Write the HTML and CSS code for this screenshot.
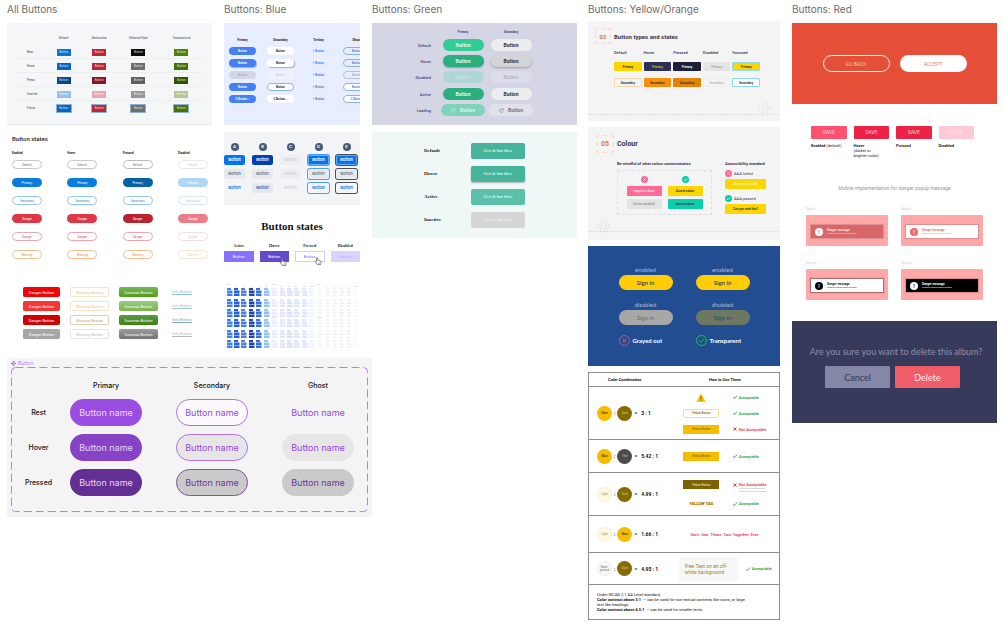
FILE: index.html
```html
<!DOCTYPE html>
<html lang="en">
<head>
<meta charset="utf-8">
<title>Button inspiration board</title>
<link rel="stylesheet" href="styles.css">
</head>
<body>
<svg class="defs" width="0" height="0" aria-hidden="true">
  <symbol id="check" viewBox="0 0 12 12"><path d="M2 6.5 4.8 9.2 10.2 3" fill="none" stroke="currentColor" stroke-width="1.6"/></symbol>
  <symbol id="cross" viewBox="0 0 12 12"><path d="M3 3 9 9M9 3 3 9" fill="none" stroke="currentColor" stroke-width="1.8"/></symbol>
  <symbol id="reload" viewBox="0 0 12 12"><path d="M9.5 8.5A4.3 4.3 0 1 1 9.6 3.7" fill="none" stroke="currentColor" stroke-width="1.5"/><path d="M10.8 1.4V5.2H7Z" fill="currentColor"/></symbol>
  <symbol id="hand" viewBox="0 0 16 16"><path d="M5 9V2.2a1.2 1.2 0 0 1 2.4 0V6.4l1.8.3 3.6 1c1 .3 1.4 1 1.3 2L13.500 15H6.500L2.200 9.800C1.600 8.500 3 7.800 3.800 8.600Z" fill="#fff" stroke="#444" stroke-width="1.200"/><path d="M8.500 11v2.500M10.800 11v2.500" stroke="#444" stroke-width=".8"/></symbol>
  <symbol id="cactus" viewBox="0 0 14 18"><path d="M5.500 17V3a1.800 1.800 0 0 1 3.600 0V15M5.500 12.500H3.500a2 2 0 0 1-2-2V8a1 1 0 0 1 2 0v2h2M9 10h1.500V7a1 1 0 0 1 2.200 0v3a2.500 2.500 0 0 1-2.500 2.500H9" fill="none" stroke="#dededf" stroke-width=".8" stroke-dasharray="1.500 .8"/></symbol>
  <symbol id="corners" viewBox="0 0 18 18"><path d="M.8 3V.8H3M7 .8h4M15 .8h2.200V3M17.200 7v4M17.200 15v2.200H15M11 17.200H7M3 17.200H.8V15M.8 11V7" fill="none" stroke="#fbd3ab" stroke-width="1"/></symbol>
</svg>

<main class="board">
  <section class="left">
    <div class="left-cols">
      <div class="col">
        <h2>All Buttons</h2>
        <div class="pa">
          <table>
            <colgroup><col class="c16"><col class="c19"><col class="c19"><col class="c23"><col class="c23"></colgroup>
            <thead><tr><td></td><th>Default</th><th>Destructive</th><th>Editorial/Dark</th><th>Transactional</th></tr></thead>
            <tbody>
            <tr><th>Rest</th><td><button class="a-blue">Button</button></td><td><button class="a-red">Button</button></td><td><button class="a-black">Button</button></td><td><button class="a-green">Button</button></td></tr>
            <tr><th>Hover</th><td><button class="a-blue2">Button</button></td><td><button class="a-red">Button</button></td><td><button class="a-gray">Button</button></td><td><button class="a-green2">Button</button></td></tr>
            <tr><th>Press</th><td><button class="a-blue3">Button</button></td><td><button class="a-red3">Button</button></td><td><button class="a-gray2">Button</button></td><td><button class="a-green3">Button</button></td></tr>
            <tr><th>Inactive</th><td><button class="a-blue4">Button</button></td><td><button class="a-red4">Button</button></td><td><button class="a-gray4">Button</button></td><td><button class="a-green4">Button</button></td></tr>
            <tr><th>Focus</th><td><button class="a-blue2 a-focus">Button</button></td><td><button class="a-red a-focus">Button</button></td><td><button class="a-gray a-focus">Button</button></td><td><button class="a-green2 a-focus">Button</button></td></tr>
            </tbody>
          </table>
        </div>

        <div class="pb">
          <h3>Button states</h3>
          <div class="pb-grid">
            <b>Enabled</b><b>Hover</b><b>Pressed</b><b>Disabled</b>
            <button class="b-def">Default</button><button class="b-def lift">Default</button><button class="b-def dark">Default</button><button class="b-def off">Default</button>
            <button class="b-pri">Primary</button><button class="b-pri lift">Primary</button><button class="b-pri press">Primary</button><button class="b-pri fade">Primary</button>
            <button class="b-sec">Secondary</button><button class="b-sec lift">Secondary</button><button class="b-sec">Secondary</button><button class="b-sec off">Secondary</button>
            <button class="b-dan">Danger</button><button class="b-dan lift">Danger</button><button class="b-dan press">Danger</button><button class="b-dan fade">Danger</button>
            <button class="b-dao">Danger</button><button class="b-dao lift">Danger</button><button class="b-dao">Danger</button><button class="b-dao off">Danger</button>
            <button class="b-war">Warning</button><button class="b-war lift">Warning</button><button class="b-war">Warning</button><button class="b-war off">Warning</button>
          </div>
        </div>

        <div class="pc">
          <button class="c-d1">Danger Button</button><button class="c-w1">Warning Button</button><button class="c-s1">Success Button</button><a href="#" class="c-i1">Info Button</a>
          <button class="c-d2">Danger Button</button><button class="c-w1">Warning Button</button><button class="c-s2">Success Button</button><a href="#" class="c-i2">Info Button</a>
          <button class="c-d3">Danger Button</button><button class="c-w3">Warning Button</button><button class="c-s3">Success Button</button><a href="#" class="c-i3">Info Button</a>
          <button class="c-d4">Danger Button</button><button class="c-w4">Warning Button</button><button class="c-s4">Success Button</button><a href="#" class="c-i4">Info Button</a>
        </div>
      </div>

      <div class="col">
        <h2>Buttons: Blue</h2>
        <div class="pd">
          <b>Primary</b><b>Secondary</b><b>Tertiary</b><b>Ghost</b>
          <button class="d-p">Button</button><button class="d-s">Button</button><button class="d-t">+ Button</button><button class="d-g">Button</button>
          <button class="d-p shade">Button</button><button class="d-s shade">Button</button><button class="d-t">+ Button</button><button class="d-g">Button</button>
          <button class="d-p off">Button</button><button class="d-s off">Button</button><button class="d-t">+ Button</button><button class="d-g off">Button</button>
          <button class="d-p">Button</button><button class="d-s ring">Button</button><button class="d-t">+ Button</button><button class="d-g fill">Button</button>
          <button class="d-p">C Button...</button><button class="d-s">C Button...</button><button class="d-t">+ Button</button><button class="d-g fill">C Button</button>
        </div>

        <div class="pe">
          <i>A</i><i>B</i><i>C</i><i>D</i><i>E</i>
          <button class="e-p">Button</button><button class="e-p2">Button</button><button class="e-off">Button</button><button class="e-p halo">Button</button><button class="e-p halo-k">Button</button>
          <button class="e-s">Button</button><button class="e-s">Button</button><button class="e-off">Button</button><button class="e-s halo">Button</button><button class="e-s halo-k">Button</button>
          <button class="e-t">Button</button><button class="e-s navy">Button</button><button class="e-t off">Button</button><button class="e-t halo">Button</button><button class="e-t halo-k">Button</button>
        </div>

        <div class="pf">
          <h3>Button states</h3>
          <div class="pf-grid">
            <b>Active</b><b>Hover</b><b>Pressed</b><b>Disabled</b>
            <button class="f-1">Button</button>
            <button class="f-2">Button<svg class="hand"><use href="#hand"/></svg></button>
            <button class="f-3">Button<svg class="hand"><use href="#hand"/></svg></button>
            <button class="f-4">Button</button>
          </div>
        </div>

        <svg class="swatches" viewBox="0 0 136 64" aria-hidden="true">
          <defs>
            <g id="cell"><path d="M0 0h4v2H0zM0 2.500h5.500v2.500H0zM0 5.500h5.500v2.500H0z"/></g>
            <g id="strong">
              <use href="#cell" x="3" fill="#3f82ea"/><use href="#cell" x="10" fill="#2560d8"/><use href="#cell" x="17" fill="#4b80e0"/><use href="#cell" x="25" fill="#2747ac"/><use href="#cell" x="32" fill="#3370e4"/><use href="#cell" x="40" fill="#96c2fb"/>
              <path d="M0 1h2M0 4h2M0 7h2" stroke="#ddd" stroke-width=".6"/>
            </g>
            <g id="soft">
              <use href="#cell" x="0" fill="#e9edfc"/><use href="#cell" x="8" fill="#e1e7fa"/><use href="#cell" x="15" fill="#dae2f9"/><use href="#cell" x="22" fill="#e2e5f5"/><use href="#cell" x="30" fill="#dfe8fc"/><use href="#cell" x="37" fill="#f0f5ff"/>
            </g>
            <g id="pale" stroke-width="1.200">
              <path d="M1 1h3M1 4h4M1 7h3M9 1h3M9 4h4M9 7h3M16 1h3M16 4h4M16 7h3" stroke="#e4eaf9"/><path d="M23 1h3M23 4h4M23 7h3M30 1h3M30 4h4M30 7h3" stroke="#dde3f4"/><path d="M37 1h3M37 4h4M37 7h3" stroke="#eff4ff"/>
            </g>
            <g id="line"><use href="#strong"/><use href="#soft" x="48"/><use href="#pale" x="93"/></g>
          </defs>
          <path d="M3 .5h3M48 .5h4M93 .5h3M3 33.500h5M48 33.500h5M93 33.500h5M11 2.500h2M19 2.500h2M26 2.500h2M34 2.500h2M41 2.500h3M56 2.500h2M64 2.500h2M71 2.500h2M79 2.500h2M86 2.500h3M101 2.500h2M109 2.500h2M116 2.500h2M124 2.500h2M131 2.500h3" stroke="#ccc" stroke-width=".6"/>
          <use href="#line" y="4"/><use href="#line" y="15"/><use href="#line" y="25"/><use href="#line" y="35"/><use href="#line" y="46"/><use href="#line" y="56"/>
        </svg>
      </div>
    </div>

    <div class="purple">
      <div class="purple-tag"><svg viewBox="0 0 12 12"><path d="M6 0 8.500 2.500 6 5 3.500 2.500ZM6 7 8.500 9.500 6 12 3.500 9.500ZM2.500 3.500 5 6 2.500 8.500 0 6ZM9.500 3.500 12 6 9.500 8.500 7 6Z" fill="#9a45e6"/></svg>Button</div>
      <div class="frame">
        <svg class="dash"><rect x=".5" y=".5" width="100%" height="100%" rx="4"/></svg>
        <div class="frame-labels"><span></span><b>Rest</b><b>Hover</b><b>Pressed</b></div>
        <div class="matrix">
          <b>Primary</b><b>Secondary</b><b>Ghost</b>
          <button class="p-1">Button name</button><button class="s-1">Button name</button><button class="g-1">Button name</button>
          <button class="p-2">Button name</button><button class="s-2">Button name</button><button class="g-2">Button name</button>
          <button class="p-3">Button name</button><button class="s-3">Button name</button><button class="g-3">Button name</button>
        </div>
      </div>
    </div>
  </section>

  <section class="green">
    <h2>Buttons: Green</h2>
    <div class="pg">
      <span></span><b>Primary</b><b>Secondary</b>
      <em>Default</em><button class="g-p">Button</button><button class="g-s">Button</button>
      <em>Hover</em><button class="g-p deep lift">Button</button><button class="g-s deep lift">Button</button>
      <em>Disabled</em><button class="g-p off">Button</button><button class="g-s off">Button</button>
      <em class="down">Active</em><button class="g-p deep down">Button</button><button class="g-s down">Button</button>
      <em>Loading</em><button class="g-p load"><svg><use href="#reload"/></svg>Button</button><button class="g-s load"><svg><use href="#reload"/></svg>Button</button>
    </div>
    <div class="ph">
      <b>Default</b><button>Get it for free</button>
      <b>Hover</b><button class="lift">Get it for free</button>
      <b>Active</b><button class="light">Get it for free</button>
      <b>Inactive</b><button class="off">Get it for free</button>
    </div>
  </section>

  <section class="yellow">
    <h2>Buttons: Yellow/Orange</h2>
    <div class="pi">
      <div class="num-row"><span class="num"><svg><use href="#corners"/></svg>02</span><h3>Button types and states</h3></div>
      <div class="pi-grid">
        <b>Default</b><b>Hover</b><b>Pressed</b><b>Disabled</b><b>Focused</b>
        <button class="y">Primary</button><button class="y-h">Primary</button><button class="y-p">Primary</button><button class="y-d">Primary</button><button class="y y-f">Primary</button>
        <button class="o">Secondary</button><button class="o-h">Secondary</button><button class="o-p">Secondary</button><button class="o-d">Secondary</button><button class="o o-f">Secondary</button>
      </div>
      <div class="ground right"><svg><use href="#cactus"/></svg></div>
    </div>

    <div class="pj">
      <div class="num-row big"><span class="num"><svg><use href="#corners"/></svg>05</span><h3>Colour</h3></div>
      <div class="pj-cols">
        <div>
          <h4>Be mindful of what colour communicates</h4>
          <div class="pj-box">
            <svg class="dot pink"><use href="#cross"/></svg><svg class="dot teal"><use href="#check"/></svg>
            <button class="neg">Negative colour</button><button class="acc">Accent colour</button>
            <button class="dis">Seems disabled</button><button class="acc2">Accent colour</button>
          </div>
        </div>
        <div class="aaa">
          <h4>Accessibility standard</h4>
          <p><svg class="dot pink"><use href="#cross"/></svg>AAA failed</p>
          <button class="fail">Can you read this?</button>
          <p class="second"><svg class="dot teal"><use href="#check"/></svg>AAA passed</p>
          <button>Can you read this?</button>
        </div>
      </div>
      <div class="ground"><svg><use href="#cactus"/></svg></div>
    </div>

    <div class="pk">
      <span>enabled</span><span>enabled</span>
      <button>Sign in</button><button>Sign in</button>
      <span class="gap">disabled</span><span class="gap">disabled</span>
      <button class="grayed">Sign in</button><button class="clear">Sign in</button>
      <strong><svg class="no"><use href="#cross"/></svg>Grayed out</strong><strong><svg class="yes"><use href="#check"/></svg>Transparent</strong>
    </div>

    <table class="pl">
      <colgroup><col class="combo"><col class="use"><col></colgroup>
      <thead><tr><th>Color Combination</th><th colspan="2">How to Use Them</th></tr></thead>
      <tbody>
      <tr class="r1"><td><div class="mix"><i class="main">Main</i>:<i class="darkc">Dark</i>=<b>3 : 1</b></div></td>
        <td><div class="stack"><svg class="tri" viewBox="0 0 12 11"><path d="M6 .5 11.800 10.800H.2Z" fill="#f6bd00"/><path d="M6 4v3.500M6 8.300v1.300" stroke="#866b00" stroke-width="1.300"/></svg><button class="l-out">Yellow Button</button><button class="l-fill">Yellow Button</button></div></td>
        <td><div class="stack res"><span class="ok"><svg><use href="#check"/></svg>Acceptable</span><span class="ok"><svg><use href="#check"/></svg>Acceptable</span><span class="bad"><svg><use href="#cross"/></svg>Not Acceptable</span></div></td></tr>
      <tr class="r2"><td><div class="mix"><i class="main">Main</i>:<i class="text">Text</i>=<b>5.42 : 1</b></div></td>
        <td><div class="stack"><button class="l-fill">Yellow Button</button></div></td>
        <td><div class="stack res"><span class="ok"><svg><use href="#check"/></svg>Acceptable</span></div></td></tr>
      <tr class="r3"><td><div class="mix"><i class="lightc">Light</i>:<i class="darkc">Dark</i>=<b>4.99 : 1</b></div></td>
        <td><div class="stack wide"><button class="l-dark">Yellow Button</button><mark>YELLOW TAG</mark></div></td>
        <td><div class="stack res wide"><span class="bad"><svg><use href="#cross"/></svg><span>Not Acceptable<small>(Non-yellow recognizable hex,<br>might confuse for other brands)</small></span></span><span class="ok"><svg><use href="#check"/></svg>Acceptable</span></div></td></tr>
      <tr class="r4"><td><div class="mix"><i class="lightc">Light</i>:<i class="main">Main</i>=<b>1.66 : 1</b></div></td>
        <td colspan="2" class="never">Don't. Use. These. Two. Together. Ever.</td></tr>
      <tr class="r5"><td><div class="mix"><i class="backc">Back-<br>ground</i>:<i class="darkc">Dark</i>=<b>4.95 : 1</b></div></td>
        <td colspan="2"><div class="free"><p>Free Text on an off-<br>white background</p><span class="ok"><svg><use href="#check"/></svg>Acceptable</span></div></td></tr>
      <tr class="r6"><td colspan="3">Under WCAG 2.1 AA Level standard,<br><b>Color contrast above 3:1</b> &nbsp;— can be used for non-textual contents like icons, or large<br>text like headings.<br><b>Color contrast above 4.5:1</b> &nbsp;— can be used for smaller texts.</td></tr>
      </tbody>
    </table>
  </section>

  <section class="red">
    <h2>Buttons: Red</h2>
    <div class="pm"><button class="back">GO BACK</button><button>ACCEPT</button></div>
    <div class="pn">
      <div><button class="n1">SAVE</button><p><b>Enabled</b> (default)</p></div>
      <div><button class="n2">SAVE</button><p><b>Hover</b><br>(darker or<br>brighter color)</p></div>
      <div><button class="n2">SAVE</button><p><b>Pressed</b></p></div>
      <div><button class="n4">SAVE</button><p><b>Disabled</b></p></div>
    </div>
    <p class="note">Mobile implementation for danger popup message</p>
    <div class="opts">
      <div><small>Option1</small><div class="phone"><div class="toast t1"><i>!</i><p><b>Danger message</b>Curabitur blandit tempus porttitor.</p></div></div></div>
      <div><small>Option2</small><div class="phone"><div class="toast t2"><i>!</i><p><b>Danger message</b>Curabitur blandit tempus porttitor.</p></div></div></div>
      <div><small>Option3</small><div class="phone"><div class="toast t3"><i>!</i><p><b>Danger message</b>Curabitur blandit tempus porttitor.</p></div></div></div>
      <div><small>Option4</small><div class="phone"><div class="toast t4"><i>!</i><p><b>Danger message</b>Curabitur blandit tempus porttitor.</p></div></div></div>
    </div>
    <div class="po">
      <p>Are you sure you want to delete this album?</p>
      <div><button class="cancel">Cancel</button><button class="delete">Delete</button></div>
    </div>
  </section>
</main>
</body>
</html>
```
FILE: styles.css
```css
* { box-sizing: border-box; }
body { margin: 0; background: #fff; color: #222; font-family: Roboto, "Liberation Sans", sans-serif; font-size: 4px; }
h2, h3, h4, p { margin: 0; }
h2 { height: 23px; padding-top: 3px; font: 400 10px/13px Inter, sans-serif; color: #6b6b6b; white-space: nowrap; }
button { display: flex; align-items: center; justify-content: center; margin: 0; padding: 0; border: 0; background: none; color: inherit; font: inherit; white-space: nowrap; position: relative; }
i, em { font-style: normal; }
b, th { font-weight: 700; }
.defs { position: absolute; }

.board { display: grid; grid-template-columns: 365fr 205fr 11px 192fr 12px 205fr; padding: 0 8px 0 7px; align-items: start; }
.yellow { grid-column: 4; }
.red { grid-column: 6; }
.left-cols { display: grid; grid-template-columns: 205fr 136fr; gap: 12px; padding-right: 12px; min-height: 358px; }
.col { min-width: 0; }

/* All buttons: bordered table */
.pa { padding: 8px 9px 10px; background: #f4f6f8; box-shadow: inset 0 -1px #e6e8ea; font-size: 3px; line-height: 4px; }
.pa table { width: 100%; table-layout: fixed; border-collapse: collapse; }
.pa td, .pa th { height: 14px; padding: 0; text-align: center; font-weight: 400; color: #444; white-space: nowrap; }
.pa tr { box-shadow: inset 0 -1px #eceeef; }
.pa tr:last-child { box-shadow: none; }
.pa thead tr { box-shadow: inset 0 -1px #eceeef; }
.pa tbody th { text-align: left; padding-left: 11px; }
.pa button { width: 14px; height: 7px; margin: 0 auto; color: #fffc; }
.c16 { width: 16%; } .c19 { width: 19%; } .c23 { width: 23%; }
.a-blue { background: #0a74d4; } .a-blue2 { background: #0565c0; } .a-blue3 { background: #05488e; } .a-blue4 { background: #95c2ea; }
.a-red { background: #bf2635; } .a-red3 { background: #8d1520; } .a-red4 { background: #e9a8af; }
.a-black { background: #0c0c0c; } .a-gray { background: #6e6e6e; } .a-gray2 { background: #606060; } .a-gray4 { background: #979797; }
.a-green { background: #4b8406; } .a-green2 { background: #427304; } .a-green3 { background: #2d5502; } .a-green4 { background: #b3c991; }
.a-focus { outline: 1px solid #8db1d3; }

/* Pill states */
.pb { padding: 10px 4px 0 5px; }
.pb h3 { font-size: 6px; font-weight: 500; line-height: 7px; }
.pb-grid { display: grid; grid-template-columns: repeat(4, 30px); justify-content: space-between; row-gap: 9px; padding-top: 9px; font-size: 3px; line-height: 4px; }
.pb-grid b { margin-bottom: -4px; }
.pb-grid button { height: 9px; border: 1px solid transparent; border-radius: 5px; }
.pb-grid .lift { box-shadow: 0 1px 1px #0001; }
.b-def { border-color: #c6c9cd !important; color: #777; } .b-def.dark { border-color: #b7bbc0 !important; }
.b-pri { background: #087ddc; color: #fff; } .b-pri.press { background: #0560a6; }
.b-sec { border-color: #97c7e6 !important; color: #2c8bc9; }
.b-dan { background: #dc3848; color: #fff; } .b-dan.press { background: #b92230; }
.b-dao { border-color: #eca5b2 !important; color: #d94a62; }
.b-war { border-color: #f3bf92 !important; color: #e98939; }
.pb-grid .off { opacity: .4; }
.b-pri.fade { background: #afd7f3; } .b-dan.fade { background: #eb7c88; }

/* Gradient buttons */
.pc { display: grid; grid-template-columns: 37px 39px 39px 21px; column-gap: 10px; row-gap: 4px; padding: 28px 0 0 16px; }
.pc button { height: 10px; border-radius: 2px; color: #fff; box-shadow: 0 0 1px #0003; }
.pc a { padding-left: 4px; line-height: 10px; white-space: nowrap; }
.c-d1 { background: #ef0505; } .c-d2 { background: #f63535; } .c-d3 { background: #cb0303; } .c-d4 { background: #a6a6a6; }
.pc .c-w1 { border: 1px solid #f7e3c4; color: #ecc586; box-shadow: none; }
.pc .c-w3 { border: 1px solid #dfd0b0; color: #c9a466; box-shadow: none; }
.pc .c-w4 { border: 1px solid #e4e4e4; color: #bbb; box-shadow: none; }
.c-s1 { background: linear-gradient(#74b75c, #579b18); } .c-s2 { background: linear-gradient(#98ca84, #7fb44e); }
.c-s3 { background: linear-gradient(#569b45, #437f17); } .c-s4 { background: linear-gradient(#9b9b9b, #737373); }
.c-i1 { color: #89c3cf; } .c-i2 { color: #9dc4cf; } .c-i3 { color: #7ea7b0; } .c-i4 { color: #b7b7b7; }

/* Blue pills */
.pd { display: grid; grid-template-columns: repeat(4, 27px); column-gap: 11px; row-gap: 4px; height: 102px; padding: 15px 0 0 5px; background: #e8edff; overflow: hidden; font-size: 3px; line-height: 4px; align-content: start; }
.pd b { text-align: center; margin-bottom: 1px; }
.pd button { height: 8px; border-radius: 4px; font-weight: 600; }
.d-p { background: #4380f1; color: #fff; } .d-p.off { background: #d2d7e3; color: #aab0be; }
.d-s { background: #fff; color: #222; } .d-s.off { background: #f0f3ff; color: #ccd1dd; }
.d-t { color: #4380f1; }
.d-g { border: 1px solid #8bb0f5 !important; color: #4380f1; } .d-g.off { border-color: #b9bfcc !important; color: #a4aab7; } .d-g.fill { background: #fff; }
.pd .shade { box-shadow: 1px 1px 1px #5667; }
.pd .ring { border: 1px solid #8bb0f5; }

.pe { display: grid; grid-template-columns: repeat(5, 21px); gap: 4px 7px; margin-top: 7px; padding: 11px 0 12px; background: #f3f4f6; font: 600 4px/8px Inter, sans-serif; }
.pe i { justify-self: center; width: 8px; height: 8px; border-radius: 4px; background: #475b73; color: #fff; text-align: center; }
.pe button { height: 10px; border-radius: 2px; }
.e-p { background: #0773ef; color: #fff; } .e-p2 { background: #063fae; color: #fff; }
.e-s { background: #e5e9ee; color: #67788d; } .e-s.navy { color: #3c62a8; }
.e-off { background: #eceef0; color: #d0d4d9; }
.e-t { color: #0773ef; } .e-t.off { color: #d0d4d9; }
.halo { box-shadow: inset 0 0 0 1px #fff6, 0 0 0 1px #4b9cf8; }
.halo-k { box-shadow: inset 0 0 0 1px #fff6, 0 0 0 1px #4b5056; }

.pf { padding-top: 15px; font-family: "Liberation Serif", serif; }
.pf h3 { text-align: center; font-size: 11px; font-weight: 700; line-height: 12px; color: #111; }
.pf-grid { display: grid; grid-template-columns: repeat(4, 1fr); gap: 3px 6px; padding-top: 11px; line-height: 5px; }
.pf-grid b { text-align: center; }
.pf-grid button { height: 11px; font-family: Roboto, sans-serif; color: #fff; }
.f-1 { background: #8670ff; } .f-2 { background: #634acb; }
.pf-grid .f-3 { border: 1px solid #d3cafd; color: #8670ff; }
.pf-grid .f-4 { background: #dad3ff; color: #bfb3fb; }
.hand { position: absolute; right: 2px; bottom: -4px; width: 8px; height: 8px; }
.swatches { display: block; width: 100%; margin-top: 22px; }

/* Purple component set */
.purple { padding: 2px 4px 5px; background: #f4f4f4; }
.purple-tag { display: flex; align-items: center; gap: 2px; height: 7px; font: 400 5px/7px Inter, sans-serif; color: #b981f7; }
.purple-tag svg { width: 5px; height: 5px; }
.frame { display: flex; position: relative; padding: 13px 14px 16px 0; font-family: Inter, sans-serif; }
.dash { position: absolute; inset: 0 1px 1px 0; width: calc(100% - 1px); height: calc(100% - 1px); overflow: visible; }
.dash rect { fill: none; stroke: #b67df5; stroke-width: 1; stroke-dasharray: 8 4; }
.frame b { font-size: 7px; font-weight: 500; color: #111; text-align: center; }
.frame-labels { display: grid; grid-template-rows: 11px repeat(3, 27px); gap: 8px; width: 55px; align-items: center; }
.matrix { flex: 1; display: grid; grid-template-columns: repeat(3, 1fr); grid-template-rows: 11px repeat(3, 27px); gap: 8px 34px; margin-left: 4px; align-items: center; }
.matrix button { height: 27px; border-radius: 14px; font-size: 9px; }
.p-1 { background: #994de2; color: #f0dcff; } .p-2 { background: #8743c6; color: #ead5fb; } .p-3 { background: #642f94; color: #e6d6f3; }
.s-1, .s-2, .s-3 { border: 1px solid #b06de8 !important; color: #9645dc; }
.s-1 { background: #fbf9fd; } .s-2 { background: #e6e6e6; } .s-3 { background: #cacaca; border-color: #82519f !important; color: #6e359f; }
.g-1 { color: #9645dc; } .g-2 { background: #e6e6e6; color: #9645dc; } .g-3 { background: #cacaca; color: #6e359f; }

/* Green */
.pg { display: grid; grid-template-columns: 65px 44px 44px; gap: 4px; padding: 7px 0 9px; background: #d4d6e6; align-items: center; }
.pg b { text-align: center; font-size: 3px; line-height: 5px; color: #40457f; }
.pg em { padding-right: 6px; text-align: right; font-weight: 500; color: #40457f; }
.pg button { width: 41px; height: 12px; border-radius: 6px; justify-self: center; font-size: 5px; font-weight: 700; }
.pg .load { width: 44px; gap: 4px; } .pg .load svg { width: 5px; height: 5px; }
.pg .down { margin-top: 1px; }
.g-p { background: #32cd94; color: #dffbef; } .g-p.deep { background: #2baf7e; } .g-p.off { background: #afd6d4; color: #c8e2e2; } .g-p.load { background: #80d2ba; color: #d9f2eb; }
.g-s { background: #ededee; color: #333; } .g-s.deep { background: #d4d4d5; } .g-s.off { background: #dcdde9; color: #b6b7c4; } .g-s.load { background: #e1e2ea; color: #777; }
.pg .lift, .ph .lift { box-shadow: 0 1px 2px #0004; }
.ph { display: grid; grid-template-columns: 1fr 54px; gap: 7px; margin-top: 7px; padding: 11px 52px 10px; background: #eff8f7; font: 700 5px/6px "Liberation Serif", serif; align-items: center; }
.ph button { height: 16px; border-radius: 2px; background: #46b39b; color: #dcf7f0; }
.ph .light { background: #5bc0aa; } .ph .off { background: #d5d5d5; color: #efefef; }

/* Yellow */
.yellow h2 { height: 21px; }
.pi, .pj { background: #f4f4f4; color: #343650; }
.pi { padding: 7px 0 3px; }
.num-row { display: flex; align-items: center; gap: 3px; padding-left: 7px; }
.num { display: flex; align-items: center; justify-content: center; position: relative; width: 16px; height: 16px; font-size: 6px; font-weight: 700; color: #e07c18; }
.num svg { position: absolute; inset: 0; width: 100%; height: 100%; }
.num-row h3 { font-size: 6px; font-weight: 700; }
.num-row.big { padding-left: 8px; } .big .num { width: 18px; height: 18px; } .num-row.big h3, .big .num { font-size: 7px; }
.pi-grid { display: grid; grid-template-columns: repeat(5, 1fr); gap: 7px 2px; padding: 6px 20px 0 26px; }
.pi-grid b { font-weight: 500; line-height: 5px; }
.pi-grid button { height: 9px; border-radius: 1px; font-size: 3px; font-weight: 700; }
.y { background: #ffd500; } .y-h { background: #2d3159; color: #d7bb2d; } .y-p { background: #1c1f39; color: #fff; } .y-d { background: #e5e5e5; color: #aaa; } .pi-grid .y-f { border: 1px solid #88dcea; }
.o { border: 1px solid #fad6ae !important; } .o-h { background: #f78f08; } .o-p { background: #e58305; } .o-d { color: #bbb; border: 1px solid #eee !important; } .pi-grid .o-f { border-color: #88dcea !important; background: #fff; }
.ground { display: flex; height: 18px; margin-top: 13px; padding: 0 8px; background: repeating-linear-gradient(90deg, #dedede 0 2px, transparent 2px 3px) 0 14px / 100% 1px no-repeat; }
.ground svg { width: 14px; height: 18px; } .ground.right { justify-content: flex-end; }
.pj { margin-top: 6px; padding: 8px 0 5px; }
.pj .ground { margin-top: 2px; }
.pj-cols { display: flex; gap: 13px; padding: 8px 0 0 29px; white-space: nowrap; }
.pj-cols > div:first-child { width: 95px; }
.pj h4 { font-size: 4px; line-height: 5px; font-weight: 700; }
.pj-box { display: grid; grid-template-columns: 35px 35px; justify-content: center; gap: 3px 6px; margin-top: 4px; padding: 5px 0; border: 1px dashed #dfdfdf; justify-items: center; }
.pj button { width: 35px; height: 10px; border-radius: 1px; font-size: 3px; font-weight: 700; background: #ffd500; }
.dot { width: 7px; height: 7px; padding: 1px; border-radius: 4px; color: #fff; }
.pink { background: #fc6697; } .teal { background: #08cda7; }
.pj .neg { background: #ff6996; color: #ffdbe6; } .pj .dis { background: #e3e3e3; color: #999; } .pj .acc2 { background: #08d0aa; }
.aaa p { display: flex; align-items: center; gap: 2px; height: 7px; margin: 4px 0 2px; }
.aaa .second { margin-top: 6px; }
.aaa button { width: 41px; } .pj .fail { color: #fff8ce; }

.pk { display: grid; grid-template-columns: 54px 54px; justify-content: center; gap: 2px 23px; margin-top: 6px; padding: 20px 0; background: #234d91; font: 400 6px/7px Lato, sans-serif; color: #a9bbdc; }
.pk span { text-align: center; } .pk .gap { margin-top: 9px; }
.pk button { height: 15px; border-radius: 8px; background: #ffcd05; color: #474f57; font-weight: 700; }
.pk .grayed { background: #a7a7a7; color: #777; } .pk .clear { background: #6d7862; color: #2b528b; }
.pk strong { display: flex; align-items: center; gap: 3px; margin-top: 8px; color: #fff; white-space: nowrap; }
.pk svg { width: 11px; height: 11px; padding: 1px; border: 1px solid; border-radius: 6px; }
.no { color: #e34b5c; } .yes { color: #28b967; }

.pl { width: 100%; margin-top: 6px; border-collapse: collapse; table-layout: fixed; border: 1px solid #8c8c8c; white-space: nowrap; color: #111; }
.pl td, .pl th { padding: 0; }
.pl tr { border-bottom: 1px solid #8c8c8c; }
.pl .combo { width: 43%; } .pl .use { width: 32%; }
.pl th { height: 14px; font-size: 4px; }
.pl th:first-child { padding-right: 10px; }
.r1 { height: 53px; } .r2 { height: 33px; } .r3 { height: 43px; } .r4 { height: 37px; } .r5 { height: 32px; } .r6 { height: 35px; }
.mix { display: flex; align-items: center; gap: 2px; padding-left: 8px; font-size: 5px; font-weight: 700; }
.mix i { display: flex; align-items: center; justify-content: center; width: 15px; height: 15px; border-radius: 8px; font-size: 3px; line-height: 3px; font-weight: 400; text-align: center; }
.mix b { margin-left: 2px; }
.main { background: #f6bd00; } .darkc { background: #866b00; color: #d8cb94; } .text { background: #4c4c4c; color: #bbb; }
.lightc { background: #fef8e3; border: 1px dashed #f5e9c5; color: #998d66; } .backc { background: #f6f8f8; border: 1px dashed #e5e8e8; color: #777; }
.stack { display: grid; justify-items: center; align-items: center; grid-auto-rows: 10px; gap: 6px; }
.stack.wide { gap: 9px; }
.stack.res { justify-items: start; }
.stack button { width: 36px; height: 9px; font-size: 3px; font-weight: 500; }
.l-out { border: 1px solid #f9dc86 !important; border-radius: 2px; color: #866b00; } .l-fill { background: #f6bd00; color: #866b00; } .l-dark { background: #7c6300; color: #eadc9f; }
.tri { width: 10px; height: 9px; }
mark { padding: 1px; background: #fef8e3; color: #866b00; font-weight: 700; line-height: 4px; }
.ok, .bad { display: flex; align-items: center; gap: 1px; font-weight: 500; }
.ok { color: #189a2c; } .bad { color: #e52c3b; }
.ok svg, .bad svg { width: 6px; height: 6px; flex: none; }
.bad span { position: relative; }
.bad small { position: absolute; left: 0; top: 100%; font-size: 2px; line-height: 3px; font-weight: 400; color: #999; }
.never { text-align: center; color: #e52c3b; font-weight: 500; }
.free { display: flex; align-items: center; gap: 7px; padding-left: 8px; }
.free p { width: 59px; padding: 6px; border-radius: 1px; background: #f6f7f7; font-size: 5px; line-height: 6px; color: #9a8436; }
.r6 td { padding-left: 8px; line-height: 5px; }

/* Red */
.pm { display: flex; justify-content: center; gap: 10px; padding: 32px 0; background: #e54f38; }
.pm button { width: 67px; height: 17px; border-radius: 9px; background: #fff; color: #e8836f; font-size: 5px; }
.pm .back { border: 1px solid #fff; background: none; color: #f7c4ba; }
.pn { display: grid; grid-template-columns: repeat(4, 1fr); gap: 7px; padding: 22px 23px 0 19px; line-height: 5px; white-space: nowrap; }
.pn button { width: 100%; height: 13px; margin-bottom: 4px; border-radius: 1px; font-size: 5px; color: #ffd9e0; }
.n1 { background: #fe506f; } .n2 { background: #ee2147; } .pn .n4 { background: #ffcad5; color: #ffdfe6; }
.note { margin-top: 27px; text-align: center; font-size: 5px; line-height: 7px; color: #999; }
.opts { display: grid; grid-template-columns: 1fr 1fr; gap: 15px 13px; padding: 15px 14px 0; }
.opts small { display: block; height: 8px; font-size: 3px; line-height: 4px; color: #ccc; }
.phone { padding: 10px 5px 8px; border-radius: 1px; background: #ffa8aa; }
.toast { display: flex; align-items: center; gap: 4px; height: 13px; padding-left: 4px; background: #fff; box-shadow: 0 0 1px 1px #0002; white-space: nowrap; }
.toast i { width: 8px; height: 8px; border-radius: 4px; font-size: 5px; font-weight: 700; line-height: 8px; text-align: center; }
.toast p { font-size: 2px; line-height: 3px; } .toast b { display: block; font-size: 3px; line-height: 4px; }
.t1 { background: #d76769; color: #ffe3e3; } .t1 i { background: #fff; color: #d76769; }
.t2 { color: #e77577; } .t2 i { background: #ed6a6d; color: #fff; }
.t3 { color: #222; box-shadow: 0 0 1px 1px #0005; } .t3 i { background: #000; color: #fff; }
.t4 { background: #000; color: #fff; } .t4 i { background: #fff; color: #000; }
.po { margin-top: 21px; padding: 25px 0 35px; background: #373a5a; font-family: Lato, sans-serif; text-align: center; }
.po p { padding-left: 3px; font-size: 9px; line-height: 12px; color: #8c8fae; }
.po div { display: flex; justify-content: center; gap: 5px; margin-top: 8px; padding-right: 4px; }
.po button { width: 65px; height: 22px; border-radius: 1px; font-size: 9px; }
.cancel { background: #8487a5; color: #373a5a; } .delete { background: #ef5d68; color: #ffe9ea; }
```
